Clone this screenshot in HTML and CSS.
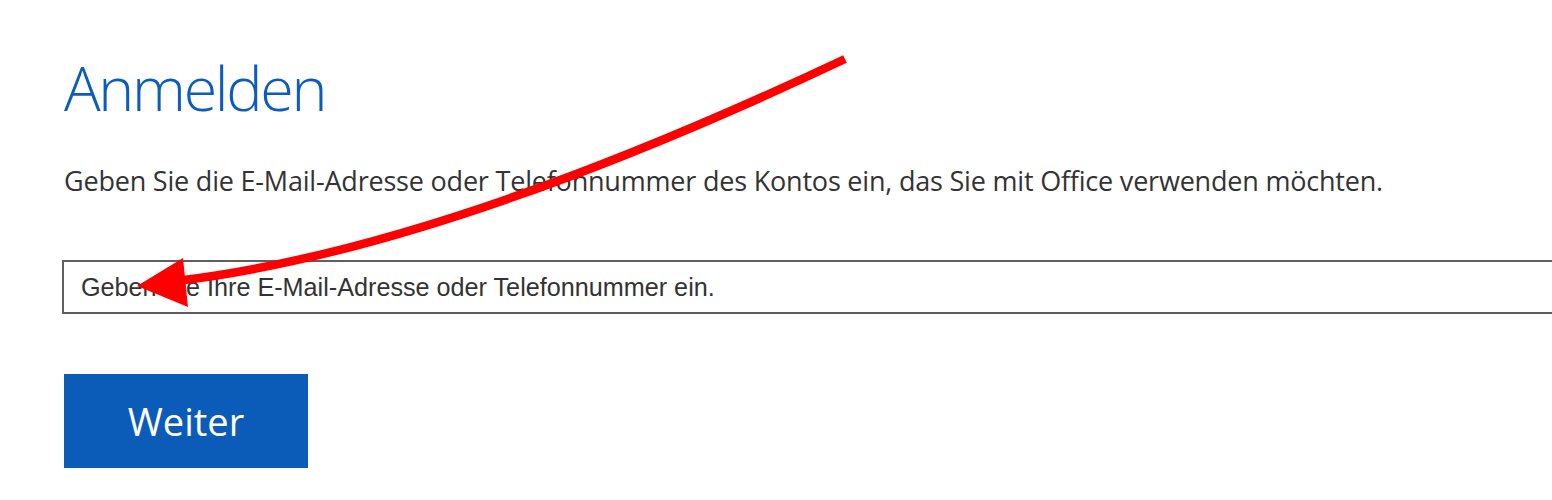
FILE: index.html
```html
<!DOCTYPE html>
<html lang="de">
  <head>
    <meta charset="UTF-8" />
    <meta name="viewport" content="width=device-width, initial-scale=1.0" />
    <title>Anmelden</title>
    <link rel="stylesheet" href="styles.css">
  </head>
  <body>
    <div class="signin">
      <h1 class="title">Anmelden</h1>
      <p class="intro">Geben Sie die E-Mail-Adresse oder Telefonnummer des Kontos ein, das Sie mit Office verwenden möchten.</p>
      <input class="email" type="text" placeholder="Geben Sie Ihre E-Mail-Adresse oder Telefonnummer ein." />
      <button class="next-button">Weiter</button>
    </div>

    <!-- annotation arrow drawn over the form -->
    <svg class="annotation" width="1552" height="500" viewBox="0 0 1552 500">
      <path d="M845 59 Q440 250 176 281" fill="none" stroke="#ff0000" stroke-width="8.5" />
      <polygon points="137,286 183,258 188,307" fill="#ff0000" />
    </svg>
  </body>
</html>
```

FILE: styles.css
```css
body {
  margin: 0;
  padding: 0;
  background: #fff;
  overflow: hidden;
  position: relative;
  height: 500px;
}
.signin {
  display: flex;
  flex-direction: column;
  align-items: flex-start;
  padding-left: 64px;
  overflow: hidden;
}
.title {
  margin: 57px 0 0 0;
  font-family: "Open Sans", sans-serif;
  font-weight: 300;
  font-size: 61px;
  line-height: 62px;
  letter-spacing: -2.3px;
  color: #0b5cbd;
}
.intro {
  margin: 46px 0 0 0;
  font-family: "Open Sans", sans-serif;
  font-size: 27px;
  line-height: 32px;
  letter-spacing: -0.2px;
  color: #333;
}
.email {
  box-sizing: border-box;
  margin: 63px 0 0 -2px;
  width: 1500px;
  height: 54px;
  padding: 0 0 0 17px;
  border: 2px solid #5f5f5f;
  border-radius: 0;
  outline: none;
  font-family: "Liberation Sans", sans-serif;
  font-size: 25.2px;
  color: #333;
}
.email::placeholder {
  color: #333;
  opacity: 1;
}
.next-button {
  margin-top: 60px;
  width: 244px;
  height: 94px;
  border: none;
  background: #0b5cb8;
  color: #fff;
  font-family: "Open Sans", sans-serif;
  font-size: 38px;
  cursor: pointer;
}
.annotation {
  position: absolute;
  top: 0;
  left: 0;
  pointer-events: none;
}
```
